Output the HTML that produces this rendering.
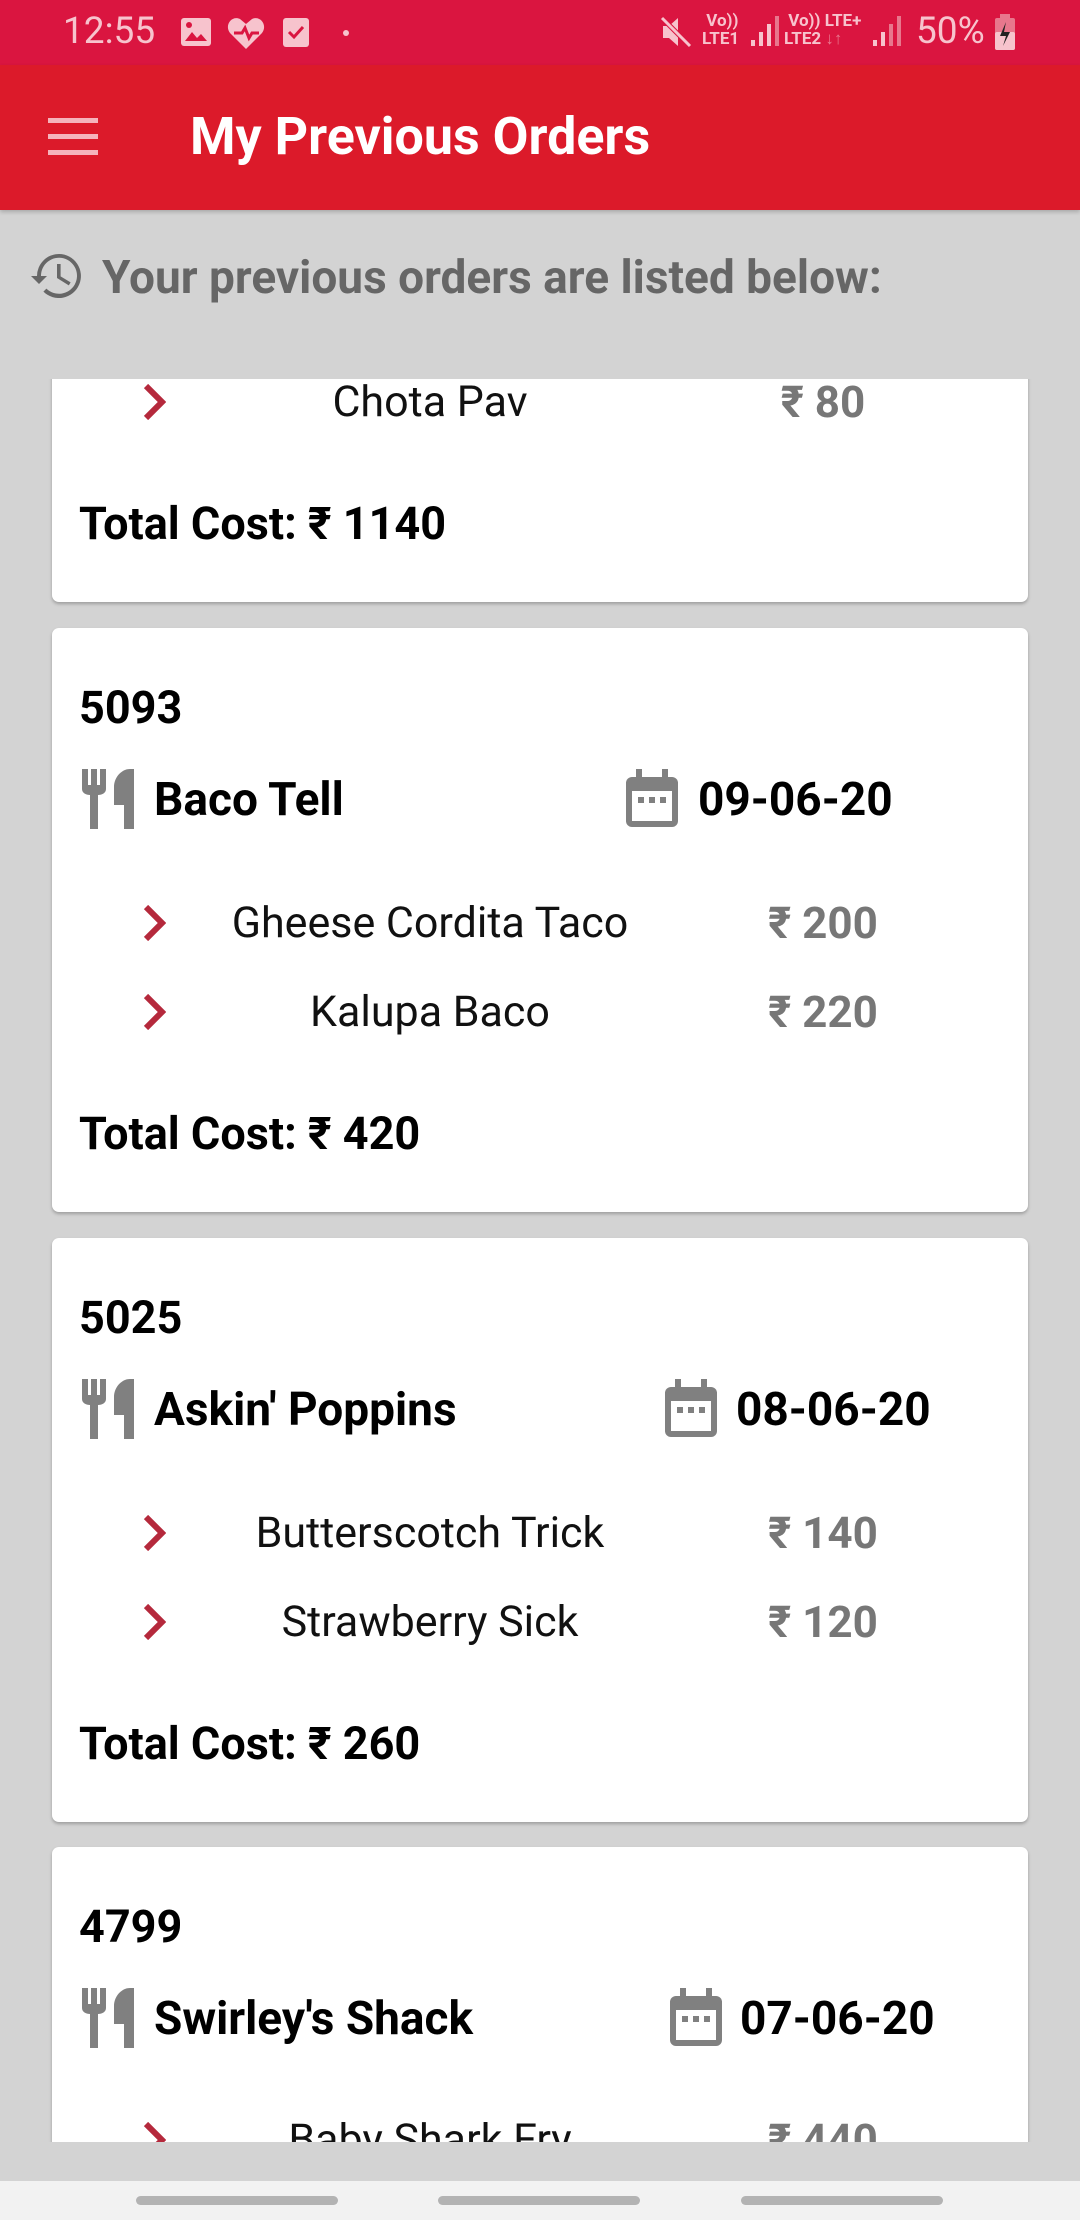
<!DOCTYPE html>
<html><head><meta charset="utf-8"><style>
*{margin:0;padding:0;box-sizing:border-box}
html,body{width:1080px;height:2220px;overflow:hidden}
body{background:#d3d3d3;font-family:"Roboto","Liberation Sans",sans-serif;position:relative}
.abs{position:absolute}
.sb{top:0;left:0;width:1080px;height:65px;background:#da1540;color:#f7c3cd}
.ab{top:65px;left:0;width:1080px;height:145px;background:#dc1a2a;box-shadow:0 2px 4px rgba(0,0,0,.2)}
.clip{top:379px;left:0;width:1080px;height:1763px;overflow:hidden}
.card{left:52px;width:976px;height:584px;background:#fff;border-radius:7px;box-shadow:0 2px 3px rgba(0,0,0,.25)}
.t{position:absolute;line-height:60px;height:60px;white-space:nowrap}
.num{left:27px;font-size:45px;font-weight:bold;color:#000}
.rest{left:102px;font-size:46px;font-weight:bold;color:#000}
.date{font-size:46px;font-weight:bold;color:#000}
.item{left:78px;width:600px;text-align:center;font-size:43px;color:#111}
.price{left:671px;width:200px;text-align:center;font-size:44px;font-weight:bold;color:#777}
.tot{left:27px;font-size:45px;font-weight:bold;color:#000}
.chev{position:absolute;left:90px;width:24px;height:36px}
.nav{top:2181px;left:0;width:1080px;height:39px;background:#f2f2f2}
.pill{top:15px;height:9px;width:202px;border-radius:5px;background:#b3b3b3}
</style></head><body>
<div class="abs sb">
<div class="abs" style="left:63px;top:9px;font-size:37px;line-height:46px">12:55</div>
<svg class="abs" style="left:180px;top:17px" width="32" height="30"><rect x="1" y="1" width="30" height="28" rx="3" fill="#f7c3cd"/><path d="M5 24l7-9 5 6 4-4 6 7z" fill="#da1540"/><circle cx="9" cy="8" r="3" fill="#da1540"/></svg>
<svg class="abs" style="left:226px;top:15px" width="40" height="36"><path d="M20 34L4 18C-2 10 6 0 14 4l6 5 6-5c8-4 16 6 10 14z" fill="#f7c3cd"/><path d="M8 18h8l3-5 4 10 3-5h7" stroke="#da1540" stroke-width="3" fill="none"/></svg>
<svg class="abs" style="left:282px;top:16px" width="28" height="32"><rect x="1" y="2" width="26" height="29" rx="3" fill="#f7c3cd"/><path d="M7 16l5 5 9-10" stroke="#da1540" stroke-width="3" fill="none"/></svg>
<div class="abs" style="left:343px;top:30px;width:6px;height:6px;border-radius:3px;background:#f7c3cd"></div>
<svg class="abs" style="left:660px;top:16px" width="32" height="32"><path d="M3 10h6l9-8v28l-9-8H3z" fill="#f7c3cd"/><path d="M2 2l28 28" stroke="#da1540" stroke-width="5"/><path d="M2 2l28 28" stroke="#f7c3cd" stroke-width="3"/></svg>
<div class="abs" style="left:702px;top:12px;font-size:17px;font-weight:bold;line-height:18px">&nbsp;Vo))<br>LTE1</div>
<svg class="abs" style="left:750px;top:16px" width="30" height="32"><rect x="1" y="24" width="4" height="6" fill="#f7c3cd"/><rect x="9" y="16" width="4" height="14" fill="#f7c3cd"/><rect x="17" y="8" width="4" height="22" fill="#f7c3cd"/><rect x="25" y="0" width="4" height="30" fill="#e8778d"/></svg>
<div class="abs" style="left:784px;top:12px;font-size:17px;font-weight:bold;line-height:18px">&nbsp;Vo)) LTE+<br>LTE2 <span style="color:#e8778d">↓↑</span></div>
<svg class="abs" style="left:872px;top:16px" width="30" height="32"><rect x="1" y="24" width="4" height="6" fill="#f7c3cd"/><rect x="9" y="16" width="4" height="14" fill="#f7c3cd"/><rect x="17" y="8" width="4" height="22" fill="#e8778d"/><rect x="25" y="0" width="4" height="30" fill="#e8778d"/></svg>
<div class="abs" style="left:916px;top:9px;font-size:37px;line-height:46px">50%</div>
<svg class="abs" style="left:994px;top:14px" width="22" height="36"><rect x="6" y="0" width="10" height="4" fill="#e8778d"/><rect x="1" y="4" width="20" height="32" rx="2" fill="#e8778d"/><rect x="1" y="18" width="20" height="18" rx="2" fill="#f7c3cd"/><path d="M12 8l-6 14h6l-3 10 7-14h-6z" fill="#222"/></svg>
</div>
<div class="abs ab">
<svg class="abs" style="left:48px;top:53px" width="50" height="38"><rect x="0" y="0" width="50" height="5" fill="#f5b3bb"/><rect x="0" y="16" width="50" height="5" fill="#f5b3bb"/><rect x="0" y="32" width="50" height="5" fill="#f5b3bb"/></svg>
<div class="abs" style="left:190px;top:42px;font-size:52px;font-weight:bold;color:#fff;line-height:60px">My Previous Orders</div>
</div>
<svg class="abs" style="left:29px;top:252px" width="56" height="48" viewBox="0 0 28 24"><path d="M15 1a11 11 0 1 1-7.8 18.8l1.5-1.5A9 9 0 1 0 6 12h3l-4 4-4-4h3A11 11 0 0 1 15 1z" fill="#666"/><path d="M14 6h1.8v6.2l5 3-.9 1.5L14 13z" fill="#666"/></svg>
<div class="abs" style="left:102px;top:250px;font-size:46px;font-weight:bold;color:#666;line-height:56px">Your previous orders are listed below:</div>

<div class="abs clip">
<div class="abs card" style="top:-361px">
<svg class="chev" style="top:366px" viewBox="0 0 12 18"><path d="M2 1l8 8-8 8" stroke="#b5293c" stroke-width="3" fill="none"/></svg>
<div class="t item" style="top:354px">Chota Pav</div><div class="t price" style="top:354px">₹ 80</div>
<div class="t tot" style="top:476px">Total Cost: ₹ 1140</div>
</div>

<div class="abs card" style="top:249px">
<div class="t num" style="top:50px">5093</div>
<svg class="abs" style="left:30px;top:141px" width="54" height="60" viewBox="0 0 27 30"><path d="M0 0h3v8h1.5V0h3v8H9V0h3v10c0 2-2 3-4 3v17H4V13c-2 0-4-1-4-3z" fill="#808080"/><path d="M16 9c0-5 4-9 8-9h2v30h-5V18h-5z" fill="#808080"/></svg>
<div class="t rest" style="top:142px">Baco Tell</div>
<svg class="abs" style="left:572px;top:141px" width="56" height="60" viewBox="0 0 28 30"><rect x="1" y="4" width="26" height="25" rx="3" fill="#808080"/><rect x="4" y="11" width="20" height="15" fill="#fff"/><rect x="6" y="0" width="3" height="6" fill="#808080"/><rect x="19" y="0" width="3" height="6" fill="#808080"/><rect x="7" y="14" width="3" height="3" fill="#808080"/><rect x="12.5" y="14" width="3" height="3" fill="#808080"/><rect x="18" y="14" width="3" height="3" fill="#808080"/></svg>
<div class="t date" style="left:646px;top:142px">09-06-20</div>
<svg class="chev" style="top:277px" viewBox="0 0 12 18"><path d="M2 1l8 8-8 8" stroke="#b5293c" stroke-width="3" fill="none"/></svg>
<div class="t item" style="top:265px">Gheese Cordita Taco</div><div class="t price" style="top:265px">₹ 200</div>
<svg class="chev" style="top:366px" viewBox="0 0 12 18"><path d="M2 1l8 8-8 8" stroke="#b5293c" stroke-width="3" fill="none"/></svg>
<div class="t item" style="top:354px">Kalupa Baco</div><div class="t price" style="top:354px">₹ 220</div>
<div class="t tot" style="top:476px">Total Cost: ₹ 420</div>
</div>

<div class="abs card" style="top:859px">
<div class="t num" style="top:50px">5025</div>
<svg class="abs" style="left:30px;top:141px" width="54" height="60" viewBox="0 0 27 30"><path d="M0 0h3v8h1.5V0h3v8H9V0h3v10c0 2-2 3-4 3v17H4V13c-2 0-4-1-4-3z" fill="#808080"/><path d="M16 9c0-5 4-9 8-9h2v30h-5V18h-5z" fill="#808080"/></svg>
<div class="t rest" style="top:142px">Askin' Poppins</div>
<svg class="abs" style="left:611px;top:141px" width="56" height="60" viewBox="0 0 28 30"><rect x="1" y="4" width="26" height="25" rx="3" fill="#808080"/><rect x="4" y="11" width="20" height="15" fill="#fff"/><rect x="6" y="0" width="3" height="6" fill="#808080"/><rect x="19" y="0" width="3" height="6" fill="#808080"/><rect x="7" y="14" width="3" height="3" fill="#808080"/><rect x="12.5" y="14" width="3" height="3" fill="#808080"/><rect x="18" y="14" width="3" height="3" fill="#808080"/></svg>
<div class="t date" style="left:684px;top:142px">08-06-20</div>
<svg class="chev" style="top:277px" viewBox="0 0 12 18"><path d="M2 1l8 8-8 8" stroke="#b5293c" stroke-width="3" fill="none"/></svg>
<div class="t item" style="top:265px">Butterscotch Trick</div><div class="t price" style="top:265px">₹ 140</div>
<svg class="chev" style="top:366px" viewBox="0 0 12 18"><path d="M2 1l8 8-8 8" stroke="#b5293c" stroke-width="3" fill="none"/></svg>
<div class="t item" style="top:354px">Strawberry Sick</div><div class="t price" style="top:354px">₹ 120</div>
<div class="t tot" style="top:476px">Total Cost: ₹ 260</div>
</div>

<div class="abs card" style="top:1468px">
<div class="t num" style="top:50px">4799</div>
<svg class="abs" style="left:30px;top:141px" width="54" height="60" viewBox="0 0 27 30"><path d="M0 0h3v8h1.5V0h3v8H9V0h3v10c0 2-2 3-4 3v17H4V13c-2 0-4-1-4-3z" fill="#808080"/><path d="M16 9c0-5 4-9 8-9h2v30h-5V18h-5z" fill="#808080"/></svg>
<div class="t rest" style="top:142px">Swirley's Shack</div>
<svg class="abs" style="left:616px;top:141px" width="56" height="60" viewBox="0 0 28 30"><rect x="1" y="4" width="26" height="25" rx="3" fill="#808080"/><rect x="4" y="11" width="20" height="15" fill="#fff"/><rect x="6" y="0" width="3" height="6" fill="#808080"/><rect x="19" y="0" width="3" height="6" fill="#808080"/><rect x="7" y="14" width="3" height="3" fill="#808080"/><rect x="12.5" y="14" width="3" height="3" fill="#808080"/><rect x="18" y="14" width="3" height="3" fill="#808080"/></svg>
<div class="t date" style="left:688px;top:142px">07-06-20</div>
<svg class="chev" style="top:275px" viewBox="0 0 12 18"><path d="M2 1l8 8-8 8" stroke="#b5293c" stroke-width="3" fill="none"/></svg>
<div class="t item" style="top:263px">Baby Shark Fry</div><div class="t price" style="top:263px">₹ 440</div>
</div>
</div>

<div class="abs nav">
<div class="abs pill" style="left:136px"></div>
<div class="abs pill" style="left:438px"></div>
<div class="abs pill" style="left:741px"></div>
</div>
</body></html>
